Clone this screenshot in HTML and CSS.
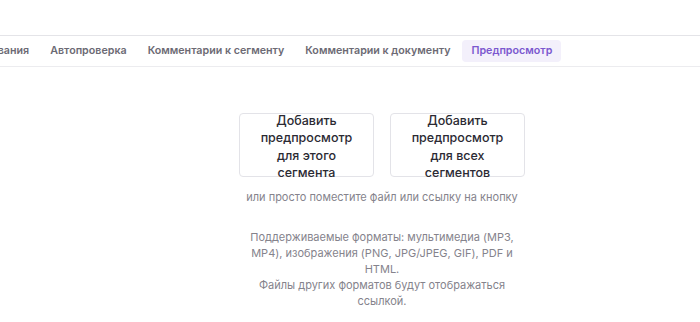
FILE: index.html
```html
<!DOCTYPE html>
<html lang="ru">
<head>
    <meta charset="UTF-8">
    <meta name="viewport" content="width=device-width, initial-scale=1.0">
    <title>Предпросмотр</title>
    <link rel="stylesheet" href="styles.css">
</head>
<body>
    <nav class="tabs">
        <div class="tab tab-cut">Правила форматирования</div>
        <div class="tab">Автопроверка</div>
        <div class="tab">Комментарии к сегменту</div>
        <div class="tab">Комментарии к документу</div>
        <div class="tab active">Предпросмотр</div>
    </nav>

    <main class="preview">
        <div class="actions">
            <button class="add-btn">Добавить предпросмотр для этого сегмента</button>
            <button class="add-btn">Добавить предпросмотр для всех сегментов</button>
        </div>
        <p class="hint">или просто поместите файл или ссылку на кнопку</p>
        <p class="formats">
            Поддерживаемые форматы: мультимедиа (MP3, MP4), изображения (PNG, JPG/JPEG, GIF), PDF и HTML.<br>
            Файлы других форматов будут отображаться ссылкой.
        </p>
    </main>
</body>
</html>
```

FILE: styles.css
```css
body {
    margin: 0;
    font-family: Inter, "Noto Sans", sans-serif;
    background-color: #fff;
    color: #2b2a33;
    overflow: hidden;
}
.tabs {
    display: flex;
    align-items: center;
    gap: 3px;
    margin-top: 35px;
    height: 30px;
    border-top: 1px solid #e4e4e8;
    border-bottom: 1px solid #ececef;
    white-space: nowrap;
}
.tab {
    padding: 4px 9px;
    font-size: 10.7px;
    font-weight: 600;
    color: #6c6a74;
    border-radius: 4px;
    line-height: 14px;
}
.tab-cut {
    margin-left: -121px;
}
.tab.active {
    background-color: #f3f0fb;
    color: #7b58cf;
}
.preview {
    display: flex;
    flex-direction: column;
    align-items: center;
    padding-left: 64px;
    padding-top: 46px;
}
.actions {
    display: flex;
    gap: 16px;
}
.add-btn {
    display: flex;
    align-items: center;
    justify-content: center;
    text-align: center;
    width: 135px;
    height: 64px;
    padding: 3px 14px 0;
    border: 1px solid #e3e3e8;
    border-radius: 4px;
    background: #fff;
    font-family: inherit;
    font-size: 12.5px;
    font-weight: 500;
    line-height: 17.5px;
    color: #2b2a33;
    overflow: visible;
}
.hint {
    margin: 12px 0 0;
    font-size: 11px;
    line-height: 16px;
    color: #85838c;
}
.formats {
    width: 280px;
    margin: 24px 0 0;
    font-size: 11px;
    line-height: 16px;
    color: #85838c;
    text-align: center;
}
```
